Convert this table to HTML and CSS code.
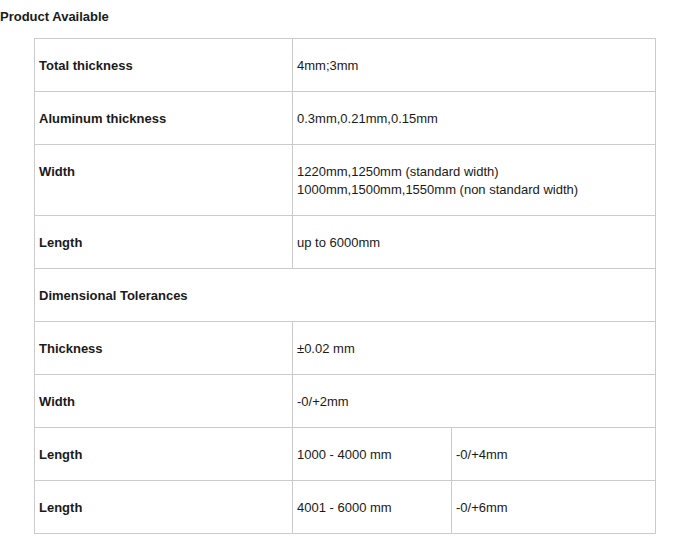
FILE: index.html
```html
<!DOCTYPE html>
<html>
<head>
<meta charset="utf-8">
<link rel="stylesheet" href="styles.css">
</head>
<body>
<h3 class="title">Product Available</h3>
<table class="spec">
  <colgroup>
    <col class="c1">
    <col class="c2">
    <col class="c3">
  </colgroup>
  <tr><th>Total thickness</th><td colspan="2">4mm;3mm</td></tr>
  <tr><th>Aluminum thickness</th><td colspan="2">0.3mm,0.21mm,0.15mm</td></tr>
  <tr><th>Width</th><td colspan="2">1220mm,1250mm (standard width)<br>1000mm,1500mm,1550mm (non standard width)</td></tr>
  <tr><th>Length</th><td colspan="2">up to 6000mm</td></tr>
  <tr><th colspan="3">Dimensional Tolerances</th></tr>
  <tr><th>Thickness</th><td colspan="2">±0.02 mm</td></tr>
  <tr><th>Width</th><td colspan="2">-0/+2mm</td></tr>
  <tr><th>Length</th><td>1000 - 4000 mm</td><td>-0/+4mm</td></tr>
  <tr><th>Length</th><td>4001 - 6000 mm</td><td>-0/+6mm</td></tr>
</table>
</body>
</html>
```
FILE: styles.css
```css
html, body {
  margin: 0;
  padding: 0;
  background: #fff;
}
body {
  font-family: "Liberation Sans", Arial, sans-serif;
  font-size: 13px;
  color: #1a1a1a;
}
.title {
  margin: 0;
  padding-top: 9px;
  font-size: 13px;
  font-weight: bold;
  line-height: 16px;
  color: #1a1a1a;
}
.spec {
  margin: 13px 0 0 34px;
  border-collapse: collapse;
  table-layout: fixed;
  width: 621px;
}
.spec .c1 { width: 258px; }
.spec .c2 { width: 159px; }
.spec .c3 { width: 204px; }
.spec th,
.spec td {
  border: 1px solid #cbcbcb;
  padding: 18px 4px 16px;
  line-height: 18px;
  text-align: left;
  vertical-align: top;
}
.spec th {
  font-weight: bold;
}
.spec td {
  font-weight: normal;
}
```
